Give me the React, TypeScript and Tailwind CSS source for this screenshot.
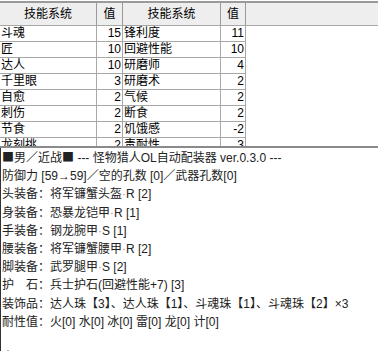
import React from "react";

const rows: [string, string, string, string][] = [
  ["斗魂", "15", "锋利度", "11"],
  ["匠", "10", "回避性能", "10"],
  ["达人", "10", "研磨师", "4"],
  ["千里眼", "3", "研磨术", "2"],
  ["自愈", "2", "气候", "2"],
  ["刺伤", "2", "断食", "2"],
  ["节食", "2", "饥饿感", "-2"],
  ["龙刻挑", "2", "毒耐性", "3"],
];

const Dot = () => <span className="text-[#d9825b]">·</span>;
const Sq = () => <span className="font-['Noto_Sans_CJK_SC',sans-serif]">■</span>;

export default function App() {
  return (
    <div
      className="w-[378px] h-[351px] overflow-hidden bg-white text-[12px] text-black"
      style={{ fontFamily: '"Liberation Sans", "Noto Sans CJK SC", sans-serif' }}
    >
      <div className="h-[146px] overflow-hidden pt-[1px]">
        <div className="border-t-2 border-[#9a9a9a]">
          <div className="flex h-[23px] bg-[#eeeeee] border-b border-[#a8a8a8] leading-[22px]">
            <div className="w-[97px] border-r border-[#9a9a9a] text-center">技能系统</div>
            <div className="w-[26px] border-r border-[#9a9a9a] text-center">值</div>
            <div className="w-[98px] border-r border-[#9a9a9a] text-center">技能系统</div>
            <div className="w-[25px] border-r border-[#9a9a9a] text-center">值</div>
            <div className="flex-1" />
          </div>
          {rows.map((r, i) => (
            <div key={i} className="flex h-[16px] leading-[15px]">
              <div className="w-[97px] border-r border-b border-[#a8a8a8] pl-[1px] whitespace-nowrap overflow-hidden">{r[0]}</div>
              <div className="w-[26px] border-r border-b border-[#a8a8a8] pr-[1px] text-right">{r[1]}</div>
              <div className="w-[98px] border-r border-b border-[#a8a8a8] pl-[1px] whitespace-nowrap overflow-hidden">{r[2]}</div>
              <div className="w-[25px] border-r border-b border-[#a8a8a8] pr-[1px] text-right">{r[3]}</div>
            </div>
          ))}
        </div>
      </div>
      <div className="h-[2px] bg-[#8a8a8a]" />
      <div className="border-l border-[#333] pl-[1px] leading-[18.2px] text-[#222] whitespace-nowrap">
        <div><Sq />男／近战<Sq /> --- 怪物猎人OL自动配装器 ver.0.3.0 ---</div>
        <div>防御力 [59→59]／空的孔数 [0]／武器孔数[0]</div>
        <div>头装备：将军镰蟹头盔<Dot />R [2]</div>
        <div>身装备：恐暴龙铠甲<Dot />R [1]</div>
        <div>手装备：钢龙腕甲<Dot />S [1]</div>
        <div>腰装备：将军镰蟹腰甲<Dot />R [2]</div>
        <div>脚装备：武罗腿甲<Dot />S [2]</div>
        <div>护　石：兵士护石(回避性能+7) [3]</div>
        <div>装饰品：达人珠【3】、达人珠【1】、斗魂珠【1】、斗魂珠【2】×3</div>
        <div>耐性值：火[0] 水[0] 冰[0] 雷[0] 龙[0] 计[0]</div>
        <div>&nbsp;</div>
        <div>┣ 回避性能 +</div>
      </div>
    </div>
  );
}
